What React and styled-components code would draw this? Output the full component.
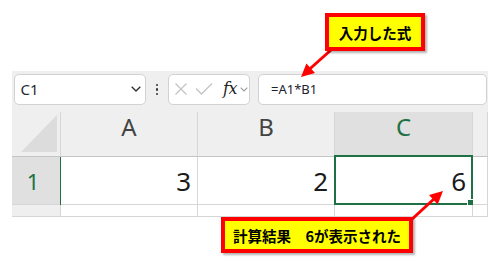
import React from "react";
import styled, { createGlobalStyle } from "styled-components";

const Global = createGlobalStyle`
  html, body { margin: 0; padding: 0; background: #fff; }
  body { font-family: "Noto Sans", "Noto Sans CJK JP", sans-serif; }
`;

const GREEN = "#1e7145";
const GRID = "#d6d6d6";
const HEAD = "#efefef";
const HEAD_SEL = "#e0e0e0";

const Page = styled.div`
  position: relative;
  width: 497px;
  height: 261px;
  overflow: hidden;
  background: #fff;
`;

const Sheet = styled.div`
  margin: 71px 0 0 12px;
  width: 476px;
  background: ${HEAD};
`;

const Toolbar = styled.div`
  height: 41px;
  box-sizing: border-box;
  padding: 3px 1px 0 1.5px;
  display: flex;
  align-items: flex-start;
`;

const Box = styled.div`
  height: 30.5px;
  box-sizing: border-box;
  background: #fff;
  border: 1px solid #d2d2d2;
  border-radius: 5px;
  display: flex;
  align-items: center;
`;

const NameBox = styled(Box)`
  width: 132.5px;
  padding: 0 4px 0 6px;
  justify-content: space-between;
  font-size: 15px;
  color: #262a33;
`;

const DotsWrap = styled.div`
  width: 22px;
  height: 30.5px;
  display: flex;
  flex-direction: column;
  align-items: center;
  justify-content: center;
  gap: 2px;
`;

const Dot = styled.span`
  width: 2.5px;
  height: 2.5px;
  background: #333;
  border-radius: 1px;
`;

const IconsBox = styled(Box)`
  width: 82px;
  padding: 0 0 0 5px;
  gap: 0;
`;

const Fx = styled.span`
  font-family: "DejaVu Serif", "Liberation Serif", serif;
  font-style: italic;
  font-size: 16px;
  color: #222;
  margin: -2px 3px 0 7px;
  letter-spacing: -0.5px;
`;

const FormulaBox = styled(Box)`
  flex: 1;
  margin-left: 8px;
  padding-left: 12px;
  font-size: 13px;
  color: #1c2230;
`;

const Row = styled.div`
  display: grid;
  grid-template-columns: 49px 137px 137px 138px 15px;
  height: ${(p) => p.$h}px;
`;

const ColHead = styled.div`
  box-sizing: border-box;
  background: ${(p) => (p.$sel ? HEAD_SEL : HEAD)};
  border-right: 1px solid ${GRID};
  border-bottom: 1px solid #c4c4c4;
  display: flex;
  justify-content: center;
  align-items: flex-start;
  padding-top: 3px;
  font-size: 24px;
  line-height: 24px;
  color: ${(p) => (p.$sel ? GREEN : "#444")};
`;

const Corner = styled(ColHead)`
  justify-content: flex-end;
  align-items: flex-end;
  padding: 0 3px 4px 0;
`;

const RowHead = styled.div`
  position: relative;
  box-sizing: border-box;
  background: ${(p) => (p.$sel ? HEAD_SEL : HEAD)};
  border-right: 1px solid ${GRID};
  border-bottom: 1px solid ${GRID};
  display: flex;
  align-items: center;
  justify-content: center;
  padding-right: 6px;
  font-size: 22px;
  line-height: 22px;
  color: ${GREEN};
  ${(p) =>
    p.$sel &&
    `&::after {
      content: "";
      position: absolute;
      top: 0;
      bottom: -1px;
      right: -2px;
      width: 2px;
      background: ${GREEN};
    }`}
`;

const Cell = styled.div`
  position: relative;
  box-sizing: border-box;
  background: #fff;
  border-right: 1px solid ${GRID};
  border-bottom: 1px solid ${GRID};
  display: flex;
  align-items: center;
  justify-content: flex-end;
  padding-right: 6px;
  font-size: 26px;
  line-height: 26px;
  color: #1a1a1a;
`;

const Selection = styled.div`
  position: absolute;
  top: -2px;
  left: -1px;
  right: -1px;
  bottom: -1px;
  border: 2px solid ${GREEN};
  pointer-events: none;
`;

const Handle = styled.div`
  position: absolute;
  right: -4px;
  bottom: -4px;
  width: 6px;
  height: 6px;
  background: ${GREEN};
  border: 1px solid #fff;
`;

const Overlay = styled.svg`
  position: absolute;
  left: 0;
  top: 0;
  pointer-events: none;
`;

const Callout = styled.div`
  position: absolute;
  left: ${(p) => p.$x}px;
  top: ${(p) => p.$y}px;
  width: ${(p) => p.$w}px;
  height: ${(p) => p.$h}px;
  box-sizing: border-box;
  background: #ffff00;
  border: 4px solid #ff0000;
  box-shadow: 2px 2px 2px rgba(0, 0, 0, 0.3);
  display: flex;
  align-items: center;
  justify-content: center;
  font-family: "Noto Sans CJK JP", "Noto Sans", sans-serif;
  font-weight: 700;
  font-size: 14.5px;
  color: #000;
  white-space: pre;
`;

const Chevron = ({ w = 10, color = "#333", sw = 1.4 }) => (
  <svg width={w} height={w / 2 + 1} viewBox={`0 0 ${w} ${w / 2 + 1}`}>
    <polyline
      points={`0.7,0.7 ${w / 2},${w / 2} ${w - 0.7},0.7`}
      fill="none"
      stroke={color}
      strokeWidth={sw}
    />
  </svg>
);

export default function App() {
  return (
    <Page>
      <Global />
      <Sheet>
        <Toolbar>
          <NameBox>
            <span>C1</span>
            <Chevron w={10} />
          </NameBox>
          <DotsWrap>
            <Dot />
            <Dot />
            <Dot />
          </DotsWrap>
          <IconsBox>
            <svg width="14" height="14" viewBox="0 0 14 14">
              <path d="M1.5 1.5 L12.5 12.5 M12.5 1.5 L1.5 12.5" stroke="#c4c4c4" strokeWidth="1.3" fill="none" />
            </svg>
            <svg width="22" height="14" viewBox="0 0 22 14" style={{ marginLeft: 6 }}>
              <polyline points="2,6.5 7.5,12 18,1.5" stroke="#c4c4c4" strokeWidth="1.3" fill="none" />
            </svg>
            <Fx>fx</Fx>
            <Chevron w={8} color="#999" sw={1.1} />
          </IconsBox>
          <FormulaBox>=A1*B1</FormulaBox>
        </Toolbar>
        <Row $h={45}>
          <Corner>
            <svg width="36" height="37" viewBox="0 0 36 37">
              <polygon points="36,0 36,37 0,37" fill="#dcdcdc" />
            </svg>
          </Corner>
          <ColHead>A</ColHead>
          <ColHead>B</ColHead>
          <ColHead $sel>C</ColHead>
          <ColHead />
        </Row>
        <Row $h={48}>
          <RowHead $sel>1</RowHead>
          <Cell>3</Cell>
          <Cell>2</Cell>
          <Cell>
            6
            <Selection>
              <Handle />
            </Selection>
          </Cell>
          <Cell />
        </Row>
        <Row $h={12}>
          <RowHead />
          <Cell />
          <Cell />
          <Cell />
          <Cell />
        </Row>
      </Sheet>

      <Overlay width="497" height="261" viewBox="0 0 497 261">
        <line x1="331" y1="50" x2="308" y2="70.5" stroke="#ff0000" strokeWidth="3" />
        <polygon points="301,77 315,73 306.4,63.5" fill="#ff0000" />
        <line x1="410" y1="221" x2="435" y2="198" stroke="#ff0000" strokeWidth="3" />
        <polygon points="443,191 437.7,204.5 429,194.9" fill="#ff0000" />
      </Overlay>

      <Callout $x={325} $y={13} $w={100} $h={38}>入力した式</Callout>
      <Callout $x={221} $y={217} $w={192} $h={36}>計算結果　6が表示された</Callout>
    </Page>
  );
}
